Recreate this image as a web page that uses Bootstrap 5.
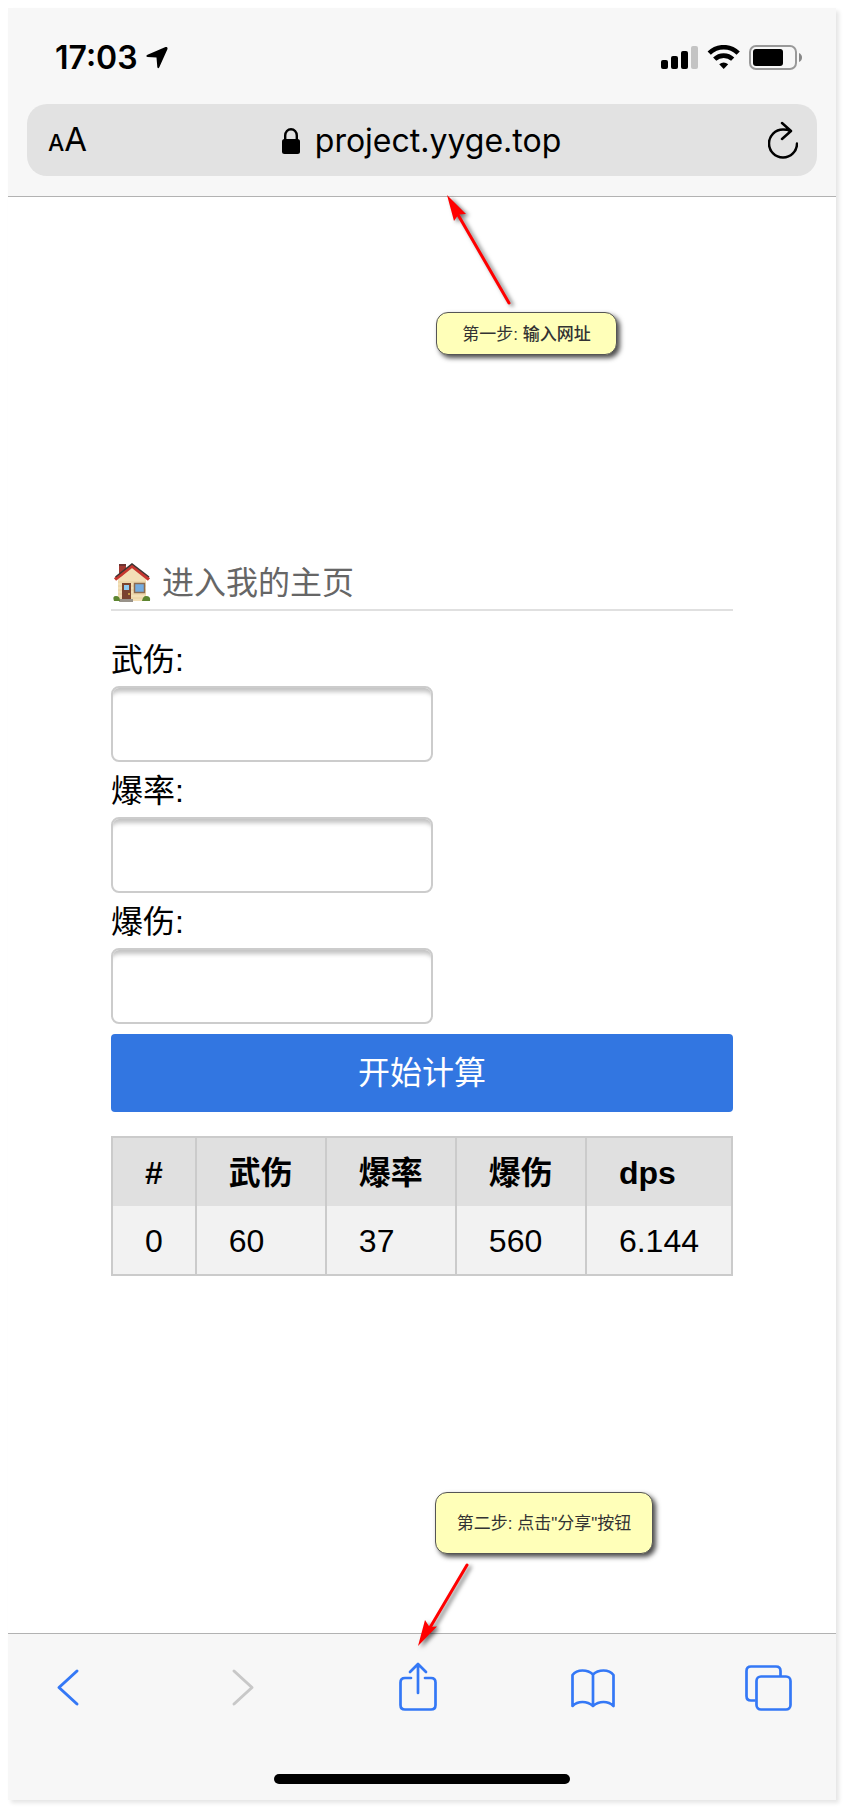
<!DOCTYPE html>
<html lang="zh-CN">
<head>
<meta charset="utf-8">
<meta name="viewport" content="width=device-width, initial-scale=1">
<title>project.yyge.top</title>
<link href="https://cdn.jsdelivr.net/npm/bootstrap@5.3.0/dist/css/bootstrap.min.css" rel="stylesheet">
<style>
  body { background: #fff; color: #000; font-family: "Liberation Sans", "Noto Sans CJK SC", sans-serif; font-size: 32px; line-height: 40px; }
  svg { display: block; fill: none; flex: none; }
  .phone { min-height: calc(100vh - 16px); margin: 8px; box-shadow: 3px 3px 4px rgba(0,0,0,.1); }
  .chrome { background: #f7f7f7; font-family: Inter, sans-serif; }
  .chrome-top { border-bottom: 1px solid #b2b2b2; padding-bottom: 20px; }
  .chrome-bottom { border-top: 1px solid #b2b2b2; padding: 28px 0 16px; }
  .status { height: 96px; padding: 4px 33px 0 47px; }
  .clock { font-weight: 600; font-size: 32px; }
  .address { height: 72px; margin: 0 19px; padding: 2px 19px 0 21px; background: #e2e2e2; border-radius: 20px; }
  .plain { background: none; border: 0; padding: 0; color: inherit; }
  .text-size { font-size: 33px; }
  .text-size small { font-size: 23px; font-weight: 500; }
  .host { color: #000; text-decoration: none; gap: 15px; margin-right: 12px; }
  .content { padding: 0 103px; }
  .home-link { color: #666; text-decoration: none; border-bottom: 2px solid #e0e0e0; height: 57px; padding-top: 2px; gap: 10px; margin-bottom: 20px; }
  .field-label { height: 55px; line-height: 58px; margin: 0; }
  .field { width: 322px; max-width: 100%; height: 76px; border: 2px solid #ccc; border-radius: 8px; font-size: 32px; box-shadow: inset 0 8px 4px -4px #c4c4c4; }
  .go { height: 78px; margin: 10px 0 24px; border: 0; border-radius: 4px; background: #3276e1; color: #fff; font-size: 32px; }
  .results { border: 2px solid #cbcbcb; border-collapse: collapse; }
  .results th, .results td { padding: 15px 32px 13px; border: 0 solid #cbcbcb; border-left-width: 2px; text-align: left; white-space: nowrap; }
  .results thead { background: #e0e0e0; }
  .results tbody { background: #f2f2f2; }
  .tools { padding: 0 43px 0 35px; color: #3478f6; }
  .tool { width: 50px; height: 50px; }
  .tool:disabled { color: #c8c8c8; }
  .home-bar { width: 296px; height: 10px; border-radius: 5px; background: #000; margin: 62px auto 0; }
  .note { background: #ffffb9; color: #333; border: 1px solid #555; border-radius: 12px; font-size: 17px; line-height: 20px; padding-top: 2px; box-shadow: 3px 3px 5px rgba(0,0,0,.7); white-space: nowrap; }
  .note-one { left: calc(50% + 14px); top: 115px; width: 181px; height: 43px; }
  .note-two { left: calc(50% + 13px); bottom: 79px; width: 218px; height: 62px; }
  .arrow { filter: drop-shadow(3px 2px 2px rgba(0,0,0,.55)); }
  .arrow-one { left: calc(50% + 18px); top: -9px; }
  .arrow-two { left: calc(50% - 12px); bottom: -19px; }
</style>
</head>
<body>
<div class="phone d-flex flex-column">
  <header class="chrome chrome-top">
    <div class="status d-flex align-items-center justify-content-between">
      <div class="d-flex align-items-center gap-2">
        <span class="clock">17:03</span>
        <svg width="22" height="22" viewBox="0 0 22 22"><path d="M19.500 0 1.500 7.700Q-1 9.300 1.500 10l9 .500.800 9.500q.700 2.200 2 .300L21.500 2Q21.700-.500 19.500 0Z" fill="#000"/></svg>
      </div>
      <svg width="142" height="26" viewBox="0 0 142 26">
        <g fill="#000"><rect y="15" width="7" height="9" rx="2"/><rect x="10" y="11" width="7" height="13" rx="2"/><rect x="20" y="6" width="7" height="18" rx="2"/></g>
        <rect x="30" y="1" width="7" height="23" rx="2" fill="#c4c4c4"/>
        <g stroke="#000" stroke-width="4.600"><path d="M48.200 8.200a20.500 20.500 0 0 1 29 0"/><path d="M53.700 14.200a13 13 0 0 1 18 0"/></g>
        <path d="M58.200 19.200q4.500-3.600 9 0L62.700 24Z" fill="#000"/>
        <rect x="89" y="1" width="46" height="23" rx="6" stroke="#999" stroke-width="2"/>
        <rect x="92" y="4" width="30" height="17" rx="3" fill="#000"/>
        <path d="M138 8q3 1.500 3 4.500t-3 4.500Z" fill="#888"/>
      </svg>
    </div>
    <div class="address d-flex align-items-center justify-content-between">
      <button class="plain text-size" type="button" aria-label="文字大小"><small>A</small>A</button>
      <a class="host d-flex align-items-center" href="#">
        <svg width="18" height="26" viewBox="0 0 18 26"><path d="M3.200 13V7.500a5.800 6.300 0 0 1 11.600 0V13" stroke="#000" stroke-width="2.400"/><rect y="11" width="18" height="15" rx="2.500" fill="#000"/></svg>
        <span>project.yyge.top</span>
      </a>
      <button class="plain" type="button" aria-label="刷新">
        <svg width="30" height="40" viewBox="0 0 30 40"><path d="M29 22.500A14 14 0 1 1 15 8.500q4 0 7 1M14 2l9 8-9 8" stroke="#000" stroke-width="2.500" stroke-linecap="round" stroke-linejoin="round"/></svg>
      </button>
    </div>
  </header>

  <main class="content position-relative flex-grow-1 d-flex flex-column justify-content-center">
    <a class="home-link d-flex align-items-center" href="#">
      <svg width="41" height="40" viewBox="0 0 41 40">
        <rect x="8" y="1" width="7" height="13" fill="#a33a32"/><path d="M8 1h7v2H8Z" fill="#6d3431"/>
        <path d="M7 16 21 4l14 12v22H7Z" fill="#f3dfb7"/><path d="M7 19h28M7 23h28M7 27h28M7 31h28M7 35h28" stroke="#e8cf9f"/>
        <path d="M4 16.500 21 3l17 13.500" stroke="#c7372f" stroke-width="3.500"/><path d="M4.500 14 21 1l17 13" stroke="#3d3431" stroke-width="1.500"/>
        <rect x="11" y="20" width="9" height="17" fill="#7a432e"/><rect x="13" y="22" width="5" height="5" fill="#8ec9f2"/><circle cx="18" cy="31" r="1" fill="#dfb44c"/>
        <rect x="23.500" y="20.500" width="10" height="9" fill="#75ace0" stroke="#8b6a50" stroke-width="1.500"/>
        <path d="M9 36h13v3H8Z" fill="#99938a"/><path d="M3 38q-2-5 2-5 4 0 4 5ZM31 38q1-5 4-5 5 0 4 5Z" fill="#5d8530"/>
      </svg>
      <span>进入我的主页</span>
    </a>
    <form>
      <label class="field-label d-block" for="damage">武伤:</label>
      <input class="field form-control" id="damage" type="text">
      <label class="field-label d-block" for="rate">爆率:</label>
      <input class="field form-control" id="rate" type="text">
      <label class="field-label d-block" for="crit">爆伤:</label>
      <input class="field form-control" id="crit" type="text">
      <button class="go btn w-100 d-block" type="button">开始计算</button>
    </form>
    <table class="results w-100">
      <thead><tr><th>#</th><th>武伤</th><th>爆率</th><th>爆伤</th><th>dps</th></tr></thead>
      <tbody><tr><td>0</td><td>60</td><td>37</td><td>560</td><td>6.144</td></tr></tbody>
    </table>

    <svg class="arrow arrow-one position-absolute" width="80" height="124" viewBox="0 0 80 124"><path d="M17 25 69 115" stroke="red" stroke-width="3" stroke-linecap="round"/><path d="m7 7 19 19-7.500.500L14 33Z" fill="red"/></svg>
    <div class="note note-one position-absolute d-flex align-items-center justify-content-center"><span>第一步: <span class="fw-medium">输入网址</span></span></div>
    <div class="note note-two position-absolute d-flex align-items-center justify-content-center"><span>第二步: 点击"分享"按钮</span></div>
    <svg class="arrow arrow-two position-absolute" width="65" height="92" viewBox="0 0 65 92"><path d="M57 5 18 71" stroke="red" stroke-width="3" stroke-linecap="round"/><path d="m8 86 7-26 4.500 7 7.500-.500Z" fill="red"/></svg>
  </main>

  <footer class="chrome chrome-bottom">
    <nav class="tools d-flex justify-content-between" aria-label="工具栏">
      <button class="plain tool" type="button" aria-label="后退"><svg width="50" height="50" viewBox="0 0 50 50" stroke="currentColor" stroke-width="3" stroke-linecap="round" stroke-linejoin="round"><path d="M34 9 16 25.500 34 42"/></svg></button>
      <button class="plain tool" type="button" aria-label="前进" disabled><svg width="50" height="50" viewBox="0 0 50 50" stroke="currentColor" stroke-width="3" stroke-linecap="round" stroke-linejoin="round"><path d="m16 9 18 16.500L16 42"/></svg></button>
      <button class="plain tool" type="button" aria-label="分享"><svg width="50" height="50" viewBox="0 0 50 50" stroke="currentColor" stroke-width="2.700" stroke-linecap="round" stroke-linejoin="round"><path d="M18 16h-6q-4.500 0-4.500 4.500v22.500q0 4.500 4.500 4.500h26q4.500 0 4.500-4.500V20.500q0-4.500-4.500-4.500h-6M25 31V2.500M17 10l8-8 8 8"/></svg></button>
      <button class="plain tool" type="button" aria-label="书签"><svg width="50" height="50" viewBox="0 0 50 50" stroke="currentColor" stroke-width="2.700" stroke-linecap="round" stroke-linejoin="round"><path d="M25 12.500Q21 8.500 14.500 8.500T4.500 13v31q4-4 10-4t10.500 4q4.500-4 10.500-4t10 4V13q-3.500-4.500-10-4.500T25 12.500V44"/></svg></button>
      <button class="plain tool" type="button" aria-label="标签页"><svg width="50" height="50" viewBox="0 0 50 50" stroke="currentColor" stroke-width="2.700" stroke-linejoin="round"><path d="M12.500 38.500H8q-4.500 0-4.500-4.500V9Q3.500 4.500 8 4.500h25q4.500 0 4.500 4.500v5.500"/><rect x="13.500" y="14.500" width="34" height="33" rx="4.500"/></svg></button>
    </nav>
    <div class="home-bar"></div>
  </footer>
</div>
<script src="https://cdn.jsdelivr.net/npm/bootstrap@5.3.0/dist/js/bootstrap.bundle.min.js"></script>
</body>
</html>
